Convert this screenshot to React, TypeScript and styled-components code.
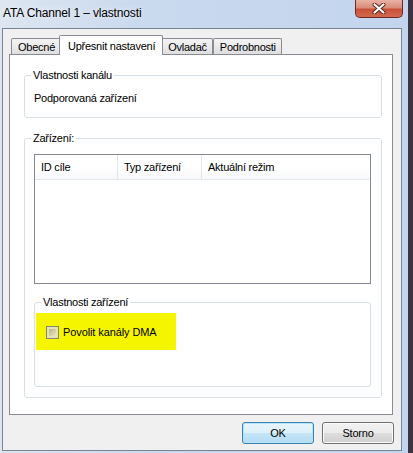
import styled, { createGlobalStyle } from "styled-components";

const GlobalStyle = createGlobalStyle`
  html, body {
    margin: 0;
    padding: 0;
    background: #3d3441;
  }
  body {
    font-family: "Liberation Sans", Arial, sans-serif;
    font-size: 11px;
    color: #000;
  }
`;

const Window = styled.div`
  width: 408px;
  height: 453px;
  box-sizing: border-box;
  padding: 0 6px 2px 2px;
  display: flex;
  flex-direction: column;
  background: linear-gradient(to right, #dde6f1 0%, #c9d9ee 35%, #c3d5ed 100%);
`;

const TitleBar = styled.div`
  height: 28px;
  margin-left: -2px;
  margin-right: -6px;
  padding-left: 3px;
  display: flex;
  justify-content: space-between;
  align-items: flex-start;
`;

const Title = styled.span`
  margin-top: 6px;
  font-size: 12px;
  line-height: 15px;
  letter-spacing: -0.15px;
  color: #000;
  text-shadow: 0 0 6px rgba(255, 255, 255, 0.95);
`;

const CloseButton = styled.div`
  width: 48px;
  height: 18px;
  margin-right: 5px;
  box-sizing: border-box;
  border: 1px solid #6e2a22;
  border-top: none;
  border-radius: 0 0 5px 5px;
  background: linear-gradient(to bottom, #e9b2a4 0%, #d98c79 45%, #c85138 55%, #d26a4f 100%);
  display: flex;
  align-items: center;
  justify-content: center;
`;

const Client = styled.div`
  flex: 1;
  box-sizing: border-box;
  border: 1px solid #7b8494;
  background: #f0f0f0;
  padding: 6px 8px 0 6px;
  display: flex;
  flex-direction: column;
`;

const TabRow = styled.div`
  height: 20px;
  padding-left: 2px;
  margin-bottom: -1px;
  display: flex;
  align-items: flex-start;
  position: relative;
  z-index: 1;
`;

const Tab = styled.div<{ $active?: boolean }>`
  box-sizing: border-box;
  position: relative;
  display: flex;
  align-items: center;
  border: 1px solid #898c95;
  border-bottom: none;
  border-radius: 2px 2px 0 0;
  letter-spacing: -0.25px;
  white-space: nowrap;
  height: ${(p) => (p.$active ? "20px" : "16px")};
  margin: ${(p) => (p.$active ? "0 -2px" : "3px 0 0 0")};
  padding: ${(p) => (p.$active ? "0 7px 0 8px" : "1px 5px 0 6px")};
  background: ${(p) =>
    p.$active ? "#ffffff" : "linear-gradient(to bottom, #f3f3f3 0%, #ebebeb 50%, #dedede 100%)"};
  z-index: ${(p) => (p.$active ? 2 : 0)};
`;

const Panel = styled.div`
  height: 361px;
  box-sizing: border-box;
  border: 1px solid #898c95;
  background: #fff;
  padding: 0 10px 0 14px;
  display: flex;
  flex-direction: column;
`;

const GroupBox = styled.fieldset<{ $top: number }>`
  margin: ${(p) => p.$top}px 0 0 0;
  padding: 0;
  min-inline-size: 0;
  border: 1px solid #d5dfe5;
  border-radius: 3px;
`;

const Legend = styled.legend`
  margin-left: 6px;
  padding: 0 2px;
  line-height: 14px;
  letter-spacing: -0.25px;
  color: #000;
`;

const GroupText = styled.div`
  padding: 9px 9px 12px;
  line-height: 14px;
  letter-spacing: -0.25px;
`;

const GroupBody = styled.div`
  padding: 9px 10px 10px 9px;
  display: flex;
  flex-direction: column;
`;

const ListView = styled.div`
  height: 130px;
  box-sizing: border-box;
  border: 1px solid #828790;
  background: #fff;
`;

const ListHeader = styled.div`
  height: 24px;
  display: grid;
  grid-template-columns: 83px 84px 1fr;
  margin-right: 1px;
  border-bottom: 1px solid #e3e6ea;
  background: linear-gradient(to bottom, #ffffff 0%, #ffffff 50%, #f7f8fa 100%);
`;

const HeaderCell = styled.div`
  display: flex;
  align-items: center;
  padding-left: 6px;
  border-right: 1px solid #e5e5e5;
  letter-spacing: -0.25px;
  white-space: nowrap;
  &:last-child {
    border-right: none;
  }
`;

const InnerGroup = styled.div`
  padding: 4px 0 36px 1px;
`;

const Highlight = styled.div`
  width: 140px;
  height: 37px;
  box-sizing: border-box;
  padding-left: 10px;
  background: #f6f500;
  display: flex;
  align-items: center;
  gap: 4px;
`;

const CheckBox = styled.span`
  width: 13px;
  height: 13px;
  box-sizing: border-box;
  border: 1px solid #86866a;
  padding: 2px;
  background: #e6e2b8;
  display: flex;
  margin-top: 1px;
  &::after {
    content: "";
    flex: 1;
    background: linear-gradient(135deg, #b7b28c 0%, #d7d2a6 60%, #ece8c0 100%);
  }
`;

const CheckLabel = styled.span`
  letter-spacing: -0.1px;
`;

const ButtonRow = styled.div`
  margin-top: 7px;
  display: flex;
  justify-content: flex-end;
  gap: 8px;
  margin-right: -1px;
`;

const Button = styled.div<{ $default?: boolean }>`
  width: 72px;
  height: 22px;
  box-sizing: border-box;
  border-radius: 3px;
  display: flex;
  align-items: center;
  justify-content: center;
  letter-spacing: -0.2px;
  border: 1px solid ${(p) => (p.$default ? "#3c7fb1" : "#707070")};
  box-shadow: inset 0 0 0 1px ${(p) => (p.$default ? "#b6e4fb" : "#fbfbfb")};
  background: ${(p) =>
    p.$default
      ? "linear-gradient(to bottom, #e8f5fc 0%, #dcf0fb 50%, #c4e5f8 51%, #b3dbf4 100%)"
      : "linear-gradient(to bottom, #f2f2f2 0%, #ebebeb 50%, #dddddd 51%, #cfcfcf 100%)"};
`;

const CloseIcon = () => (
  <svg width="14" height="11" viewBox="0 0 14 11">
    <path d="M2.5 1.5 L11.5 9.5 M11.5 1.5 L2.5 9.5" stroke="#5a2018" strokeWidth="4" strokeLinecap="round" />
    <path d="M2.5 1.5 L11.5 9.5 M11.5 1.5 L2.5 9.5" stroke="#ffffff" strokeWidth="2.2" strokeLinecap="round" />
  </svg>
);

const tabs = ["Obecné", "Upřesnit nastavení", "Ovladač", "Podrobnosti"];

export default function App() {
  return (
    <>
      <GlobalStyle />
      <Window>
        <TitleBar>
          <Title>ATA Channel 1 – vlastnosti</Title>
          <CloseButton>
            <CloseIcon />
          </CloseButton>
        </TitleBar>
        <Client>
          <TabRow>
            {tabs.map((t, i) => (
              <Tab key={t} $active={i === 1}>
                {t}
              </Tab>
            ))}
          </TabRow>
          <Panel>
            <GroupBox $top={13}>
              <Legend>Vlastnosti kanálu</Legend>
              <GroupText>Podporovaná zařízení</GroupText>
            </GroupBox>
            <GroupBox $top={13}>
              <Legend>Zařízení:</Legend>
              <GroupBody>
                <ListView>
                  <ListHeader>
                    <HeaderCell>ID cíle</HeaderCell>
                    <HeaderCell>Typ zařízení</HeaderCell>
                    <HeaderCell>Aktuální režim</HeaderCell>
                  </ListHeader>
                </ListView>
                <GroupBox $top={11}>
                  <Legend>Vlastnosti zařízení</Legend>
                  <InnerGroup>
                    <Highlight>
                      <CheckBox />
                      <CheckLabel>Povolit kanály DMA</CheckLabel>
                    </Highlight>
                  </InnerGroup>
                </GroupBox>
              </GroupBody>
            </GroupBox>
          </Panel>
          <ButtonRow>
            <Button $default>OK</Button>
            <Button>Storno</Button>
          </ButtonRow>
        </Client>
      </Window>
    </>
  );
}
